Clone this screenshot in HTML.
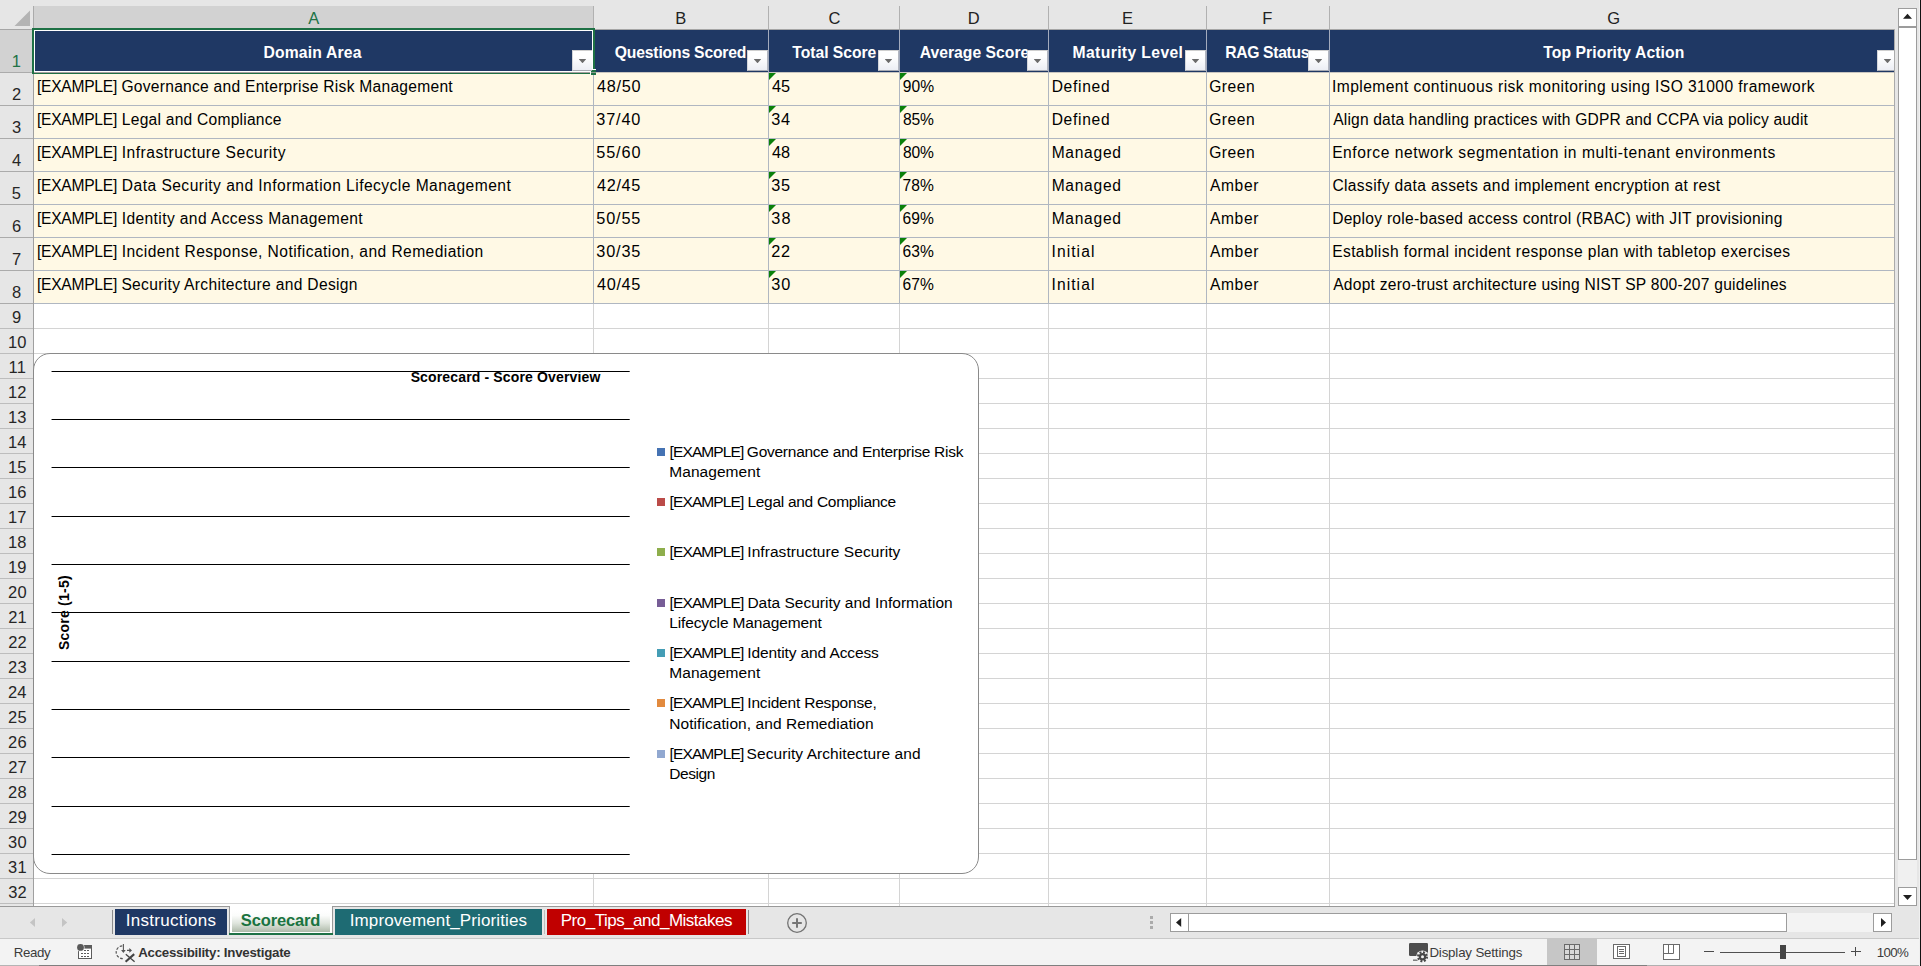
<!DOCTYPE html>
<html lang="en"><head><meta charset="utf-8"><title>Scorecard</title>
<style>
html,body{margin:0;padding:0}
body{width:1921px;height:966px;overflow:hidden;position:relative;background:#fff;font-family:"Liberation Sans",sans-serif}
div,span,svg{position:absolute;box-sizing:border-box}
.t{white-space:pre;line-height:24px;height:24px}
.dd{width:21px;height:21px;top:50px;background:linear-gradient(#ffffff 0%,#ffffff 30%,#eceef4 100%);border:1px solid #c4c6cc;border-top-color:#cfcfcf;border-left-color:#d4d6da;border-right-color:#b2b6c0;border-bottom-color:#a8abb3}
.dd:after{content:"";position:absolute;left:5.7px;top:8px;width:7.6px;height:4.2px;background:#6b6b6b;clip-path:polygon(0 0,100% 0,50% 100%)}
.tri{width:0;height:0;border-top:7px solid #0a800a;border-right:7px solid transparent}
.cl{height:1px;background:linear-gradient(90deg,rgba(0,0,0,.45) 0,rgba(0,0,0,.45) 1px,#000 1px,#000 578px,rgba(0,0,0,.7) 578px);left:51px;width:579px}
.sq{width:8px;height:8px;left:657px}
.sb{background:#fff;border:1px solid #9c9c9c}
</style></head><body>

<div style="left:0px;top:0px;width:1921px;height:29px;background:#e6e6e6;"></div>
<div style="left:0px;top:29px;width:33px;height:878px;background:#e6e6e6;"></div>
<div style="left:34px;top:6px;width:559px;height:23px;background:#d2d2d2;"></div>
<div style="left:0px;top:30px;width:33px;height:42px;background:#d2d2d2;"></div>
<svg style="left:0;top:0" width="33" height="29"><polygon points="30,10.5 30,26 14.5,26" fill="#b4b4b4"/></svg>
<div style="left:33px;top:6px;width:1px;height:23px;background:#ababab;"></div>
<div style="left:593px;top:6px;width:1px;height:23px;background:#b1b1b1;"></div>
<div style="left:768px;top:6px;width:1px;height:23px;background:#b1b1b1;"></div>
<div style="left:899px;top:6px;width:1px;height:23px;background:#b1b1b1;"></div>
<div style="left:1048px;top:6px;width:1px;height:23px;background:#b1b1b1;"></div>
<div style="left:1206px;top:6px;width:1px;height:23px;background:#b1b1b1;"></div>
<div style="left:1329px;top:6px;width:1px;height:23px;background:#b1b1b1;"></div>
<div style="left:0px;top:29px;width:1895px;height:1px;background:#a6a6a6;"></div>
<div style="left:0px;top:72px;width:33px;height:1px;background:#ababab;"></div>
<div style="left:0px;top:105px;width:33px;height:1px;background:#ababab;"></div>
<div style="left:0px;top:138px;width:33px;height:1px;background:#ababab;"></div>
<div style="left:0px;top:171px;width:33px;height:1px;background:#ababab;"></div>
<div style="left:0px;top:204px;width:33px;height:1px;background:#ababab;"></div>
<div style="left:0px;top:237px;width:33px;height:1px;background:#ababab;"></div>
<div style="left:0px;top:270px;width:33px;height:1px;background:#ababab;"></div>
<div style="left:0px;top:303px;width:33px;height:1px;background:#ababab;"></div>
<div style="left:0px;top:328px;width:33px;height:1px;background:#bdbdbd;"></div>
<div style="left:0px;top:353px;width:33px;height:1px;background:#bdbdbd;"></div>
<div style="left:0px;top:378px;width:33px;height:1px;background:#bdbdbd;"></div>
<div style="left:0px;top:403px;width:33px;height:1px;background:#bdbdbd;"></div>
<div style="left:0px;top:428px;width:33px;height:1px;background:#bdbdbd;"></div>
<div style="left:0px;top:453px;width:33px;height:1px;background:#bdbdbd;"></div>
<div style="left:0px;top:478px;width:33px;height:1px;background:#bdbdbd;"></div>
<div style="left:0px;top:503px;width:33px;height:1px;background:#bdbdbd;"></div>
<div style="left:0px;top:528px;width:33px;height:1px;background:#bdbdbd;"></div>
<div style="left:0px;top:553px;width:33px;height:1px;background:#bdbdbd;"></div>
<div style="left:0px;top:578px;width:33px;height:1px;background:#bdbdbd;"></div>
<div style="left:0px;top:603px;width:33px;height:1px;background:#bdbdbd;"></div>
<div style="left:0px;top:628px;width:33px;height:1px;background:#bdbdbd;"></div>
<div style="left:0px;top:653px;width:33px;height:1px;background:#bdbdbd;"></div>
<div style="left:0px;top:678px;width:33px;height:1px;background:#bdbdbd;"></div>
<div style="left:0px;top:703px;width:33px;height:1px;background:#bdbdbd;"></div>
<div style="left:0px;top:728px;width:33px;height:1px;background:#bdbdbd;"></div>
<div style="left:0px;top:753px;width:33px;height:1px;background:#bdbdbd;"></div>
<div style="left:0px;top:778px;width:33px;height:1px;background:#bdbdbd;"></div>
<div style="left:0px;top:803px;width:33px;height:1px;background:#bdbdbd;"></div>
<div style="left:0px;top:828px;width:33px;height:1px;background:#bdbdbd;"></div>
<div style="left:0px;top:853px;width:33px;height:1px;background:#bdbdbd;"></div>
<div style="left:0px;top:878px;width:33px;height:1px;background:#bdbdbd;"></div>
<div style="left:0px;top:903px;width:33px;height:1px;background:#bdbdbd;"></div>
<div style="left:33px;top:29px;width:1px;height:878px;background:#a0a0a0;"></div>
<div style="left:34px;top:328px;width:1860px;height:1px;background:#d4d4d4;"></div>
<div style="left:34px;top:353px;width:1860px;height:1px;background:#d4d4d4;"></div>
<div style="left:34px;top:378px;width:1860px;height:1px;background:#d4d4d4;"></div>
<div style="left:34px;top:403px;width:1860px;height:1px;background:#d4d4d4;"></div>
<div style="left:34px;top:428px;width:1860px;height:1px;background:#d4d4d4;"></div>
<div style="left:34px;top:453px;width:1860px;height:1px;background:#d4d4d4;"></div>
<div style="left:34px;top:478px;width:1860px;height:1px;background:#d4d4d4;"></div>
<div style="left:34px;top:503px;width:1860px;height:1px;background:#d4d4d4;"></div>
<div style="left:34px;top:528px;width:1860px;height:1px;background:#d4d4d4;"></div>
<div style="left:34px;top:553px;width:1860px;height:1px;background:#d4d4d4;"></div>
<div style="left:34px;top:578px;width:1860px;height:1px;background:#d4d4d4;"></div>
<div style="left:34px;top:603px;width:1860px;height:1px;background:#d4d4d4;"></div>
<div style="left:34px;top:628px;width:1860px;height:1px;background:#d4d4d4;"></div>
<div style="left:34px;top:653px;width:1860px;height:1px;background:#d4d4d4;"></div>
<div style="left:34px;top:678px;width:1860px;height:1px;background:#d4d4d4;"></div>
<div style="left:34px;top:703px;width:1860px;height:1px;background:#d4d4d4;"></div>
<div style="left:34px;top:728px;width:1860px;height:1px;background:#d4d4d4;"></div>
<div style="left:34px;top:753px;width:1860px;height:1px;background:#d4d4d4;"></div>
<div style="left:34px;top:778px;width:1860px;height:1px;background:#d4d4d4;"></div>
<div style="left:34px;top:803px;width:1860px;height:1px;background:#d4d4d4;"></div>
<div style="left:34px;top:828px;width:1860px;height:1px;background:#d4d4d4;"></div>
<div style="left:34px;top:853px;width:1860px;height:1px;background:#d4d4d4;"></div>
<div style="left:34px;top:878px;width:1860px;height:1px;background:#d4d4d4;"></div>
<div style="left:34px;top:903px;width:1860px;height:1px;background:#d4d4d4;"></div>
<div style="left:593px;top:304px;width:1px;height:602px;background:#d4d4d4;"></div>
<div style="left:768px;top:304px;width:1px;height:602px;background:#d4d4d4;"></div>
<div style="left:899px;top:304px;width:1px;height:602px;background:#d4d4d4;"></div>
<div style="left:1048px;top:304px;width:1px;height:602px;background:#d4d4d4;"></div>
<div style="left:1206px;top:304px;width:1px;height:602px;background:#d4d4d4;"></div>
<div style="left:1329px;top:304px;width:1px;height:602px;background:#d4d4d4;"></div>
<div style="left:34px;top:30px;width:1860px;height:42px;background:#1f3864;"></div>
<div style="left:34px;top:73px;width:1860px;height:230px;background:#fff9e5;"></div>
<div style="left:34px;top:72px;width:1860px;height:1px;background:#c9c6c0;"></div>
<div style="left:34px;top:105px;width:1860px;height:1px;background:#b0b7c1;"></div>
<div style="left:34px;top:138px;width:1860px;height:1px;background:#b0b7c1;"></div>
<div style="left:34px;top:171px;width:1860px;height:1px;background:#b0b7c1;"></div>
<div style="left:34px;top:204px;width:1860px;height:1px;background:#b0b7c1;"></div>
<div style="left:34px;top:237px;width:1860px;height:1px;background:#b0b7c1;"></div>
<div style="left:34px;top:270px;width:1860px;height:1px;background:#b0b7c1;"></div>
<div style="left:34px;top:303px;width:1860px;height:1px;background:#b0b7c1;"></div>
<div style="left:593px;top:72px;width:1px;height:232px;background:#b0b7c1;"></div>
<div style="left:593px;top:30px;width:1px;height:42px;background:#a3abbd;"></div>
<div style="left:768px;top:72px;width:1px;height:232px;background:#b0b7c1;"></div>
<div style="left:768px;top:30px;width:1px;height:42px;background:#a3abbd;"></div>
<div style="left:899px;top:72px;width:1px;height:232px;background:#b0b7c1;"></div>
<div style="left:899px;top:30px;width:1px;height:42px;background:#a3abbd;"></div>
<div style="left:1048px;top:72px;width:1px;height:232px;background:#b0b7c1;"></div>
<div style="left:1048px;top:30px;width:1px;height:42px;background:#a3abbd;"></div>
<div style="left:1206px;top:72px;width:1px;height:232px;background:#b0b7c1;"></div>
<div style="left:1206px;top:30px;width:1px;height:42px;background:#a3abbd;"></div>
<div style="left:1329px;top:72px;width:1px;height:232px;background:#b0b7c1;"></div>
<div style="left:1329px;top:30px;width:1px;height:42px;background:#a3abbd;"></div>
<div style="left:32px;top:28px;width:563px;height:46px;border:2px solid #1e7145;box-shadow:inset 0 0 0 1px #fff"></div>
<div style="left:34px;top:72px;width:556px;height:1px;background:#a59f9f;"></div>
<div style="left:590px;top:69px;width:6px;height:6px;background:#1e7145;border-top:1px solid #fff;border-left:1px solid #fff"></div>
<div style="left:591px;top:72px;width:5px;height:1px;background:#8a9a8f;"></div>
<div class="tri" style="left:769px;top:73px"></div>
<div class="tri" style="left:900px;top:73px"></div>
<div class="tri" style="left:769px;top:106px"></div>
<div class="tri" style="left:900px;top:106px"></div>
<div class="tri" style="left:769px;top:139px"></div>
<div class="tri" style="left:900px;top:139px"></div>
<div class="tri" style="left:769px;top:172px"></div>
<div class="tri" style="left:900px;top:172px"></div>
<div class="tri" style="left:769px;top:205px"></div>
<div class="tri" style="left:900px;top:205px"></div>
<div class="tri" style="left:769px;top:238px"></div>
<div class="tri" style="left:900px;top:238px"></div>
<div class="tri" style="left:769px;top:271px"></div>
<div class="tri" style="left:900px;top:271px"></div>
<div style="left:1894px;top:29px;width:1px;height:878px;background:#ababab;"></div>
<div style="left:33px;top:353px;width:946px;height:521px;background:#fff;border:1px solid #8a8a8a;border-radius:17px"></div>
<div class="cl" style="top:371px"></div>
<div class="cl" style="top:419px"></div>
<div class="cl" style="top:467px"></div>
<div class="cl" style="top:516px"></div>
<div class="cl" style="top:564px"></div>
<div class="cl" style="top:612px"></div>
<div class="cl" style="top:661px"></div>
<div class="cl" style="top:709px"></div>
<div class="cl" style="top:757px"></div>
<div class="cl" style="top:806px"></div>
<div class="cl" style="top:854px"></div>
<div class="sq" style="top:448px;background:#4573b3"></div>
<div class="sq" style="top:498px;background:#bb4b48"></div>
<div class="sq" style="top:548.3px;background:#8eae4c"></div>
<div class="sq" style="top:599px;background:#775d96"></div>
<div class="sq" style="top:649px;background:#449db5"></div>
<div class="sq" style="top:699px;background:#e28a3e"></div>
<div class="sq" style="top:750.2px;background:#91a8d0"></div>
<span class="t" style="left:26.9px;top:600.5px;width:74px;font-size:14px;font-weight:700;transform:rotate(-90deg);transform-origin:50% 50%;text-align:center;letter-spacing:0.22px">Score (1-5)</span>
<div style="left:1895px;top:0px;width:26px;height:907px;background:#e6e6e6;"></div>
<div class="sb" style="left:1898px;top:8px;width:19px;height:19px"></div>
<svg style="left:1898px;top:8px" width="19" height="19"><polygon points="5,10.8 14,10.8 9.5,5.8" fill="#1f1f1f"/></svg>
<div class="sb" style="left:1898px;top:27px;width:19px;height:833px"></div>
<div style="left:1898px;top:860px;width:19px;height:27px;background:#f0f0f0;"></div>
<div class="sb" style="left:1898px;top:887px;width:19px;height:19px"></div>
<svg style="left:1898px;top:887px" width="19" height="19"><polygon points="5,8 14,8 9.5,13" fill="#1f1f1f"/></svg>
<div style="left:0px;top:907px;width:1921px;height:31px;background:#e6e6e6;"></div>
<div style="left:0px;top:906px;width:1895px;height:1px;background:#999;"></div>
<svg style="left:0;top:906px" width="110" height="32"><polygon points="29.9,16.5 35,12 35,21" fill="#c4c4c4"/><polygon points="67.2,16.5 62,12 62,21" fill="#c4c4c4"/></svg>
<div style="left:112px;top:910px;width:1px;height:24px;background:#8c8c8c;"></div>
<div style="left:115px;top:909px;width:112px;height:26px;background:#1f3864;"></div>
<div style="left:229px;top:906px;width:104px;height:29px;background:#fff;"></div>
<div style="left:229px;top:906px;width:1px;height:27px;background:#999;"></div>
<div style="left:332px;top:906px;width:1px;height:27px;background:#999;"></div>
<div style="left:232px;top:910px;width:98px;height:22px;background:linear-gradient(#ffffff 0%,#fbfcfb 25%,#dfe5dd 60%,#aebaa9 100%)"></div>
<div style="left:229px;top:933px;width:104px;height:2px;background:#1e7145;"></div>
<div style="left:335px;top:909px;width:207px;height:26px;background:#1e6b73;"></div>
<div style="left:544px;top:910px;width:1px;height:24px;background:#bdbdbd;"></div>
<div style="left:547px;top:909px;width:199px;height:26px;background:#c00000;"></div>
<div style="left:748px;top:910px;width:1px;height:24px;background:#8c8c8c;"></div>
<svg style="left:785px;top:911px" width="24" height="24"><circle cx="12" cy="12" r="9.3" fill="none" stroke="#737373" stroke-width="1.3"/><path d="M7.2 12H16.8M12 7.2V16.8" stroke="#767676" stroke-width="2"/></svg>
<div style="left:1150px;top:916px;width:3px;height:3px;background:#ababab;"></div>
<div style="left:1150px;top:921px;width:3px;height:3px;background:#ababab;"></div>
<div style="left:1150px;top:926px;width:3px;height:3px;background:#ababab;"></div>
<div style="left:1170px;top:913px;width:722px;height:19px;background:#f3f3f3;"></div>
<div class="sb" style="left:1188px;top:913px;width:599px;height:19px"></div>
<div class="sb" style="left:1170px;top:913px;width:19px;height:19px"></div>
<svg style="left:1170px;top:913px" width="19" height="19"><polygon points="6,9.5 11.2,5 11.2,14" fill="#1f1f1f"/></svg>
<div class="sb" style="left:1873px;top:913px;width:19px;height:19px"></div>
<svg style="left:1873px;top:913px" width="19" height="19"><polygon points="13,9.5 8,5 8,14" fill="#1f1f1f"/></svg>
<div style="left:0px;top:938px;width:1921px;height:28px;background:#f3f3f3;"></div>
<div style="left:0px;top:938px;width:1921px;height:1px;background:#c8c8c8;"></div>
<div style="left:1547px;top:938px;width:50px;height:27px;background:#c6c6c6;"></div>
<svg style="left:76px;top:943px" width="20" height="18"><rect x="2.5" y="2.5" width="13" height="13" fill="#fff" stroke="#5c5c5c"/><rect x="8" y="2" width="8" height="3.6" fill="#5c5c5c"/><path d="M8 7.5h2M11 7.5h2M5 10.5h2M8 10.5h2M11 10.5h2M5 13.5h2M8 13.5h2M11 13.5h2" stroke="#5c5c5c" stroke-width="1"/><circle cx="4.5" cy="4.4" r="4" fill="#f3f3f3"/><circle cx="4.5" cy="4.4" r="3.4" fill="#595959"/></svg>
<svg style="left:114px;top:942px" width="24" height="22"><path d="M8.3 3.8A6.4 6.4 0 0 0 8.9 16.6" fill="none" stroke="#555" stroke-width="1.2" stroke-dasharray="2.7 1.5"/><path d="M9.4 2v8M13 8.4h4" fill="none" stroke="#555" stroke-width="1.1"/><path d="M7.1 8h4.6l-2.3 3zM15.3 6.1v4.6l2.7-2.3z" fill="#555"/><path d="M11.6 19.7l8.6-7.6" stroke="#444" stroke-width="2.1"/><path d="M11.8 12.2l8.8 7.6" stroke="#444" stroke-width="1.3"/></svg>
<svg style="left:1407px;top:941px" width="24" height="22"><rect x="2" y="2" width="19" height="13" rx="1.2" fill="#4d4d4d"/><rect x="6" y="18.6" width="5" height="1.1" fill="#4d4d4d"/><circle cx="15.5" cy="15.7" r="6.3" fill="#f3f3f3"/><circle cx="15.5" cy="15.7" r="4.5" fill="none" stroke="#474747" stroke-width="2" stroke-dasharray="1.9 1.63"/><circle cx="15.5" cy="15.7" r="3.8" fill="#474747"/><circle cx="15.5" cy="15.7" r="1.5" fill="#f3f3f3"/></svg>
<svg style="left:1564px;top:944px" width="16" height="16"><rect x=".5" y=".5" width="15" height="15" fill="#d8d8d8" stroke="#6a6a6a"/><path d="M5.5 .5v15M10.5 .5v15M.5 5.5h15M.5 10.5h15" fill="none" stroke="#6a6a6a"/></svg>
<svg style="left:1613px;top:944px" width="17" height="15"><rect x=".5" y=".5" width="16" height="14" fill="#fff" stroke="#6a6a6a"/><rect x="4.5" y="2.5" width="8" height="10" fill="#fff" stroke="#6a6a6a"/><path d="M6 5.5h5M6 7.5h5M6 9.5h5" fill="none" stroke="#6a6a6a"/></svg>
<svg style="left:1663px;top:944px" width="17" height="16"><rect x=".5" y=".5" width="16" height="15" fill="#fff" stroke="#6a6a6a"/><path d="M5.5 .5v9M10.5 .5v9M.5 9.5h10" fill="none" stroke="#6a6a6a"/></svg>
<div style="left:1704px;top:951px;width:10px;height:1px;background:#4a4a4a;"></div>
<div style="left:1720px;top:952px;width:125px;height:1px;background:#505050;"></div>
<div style="left:1780px;top:945px;width:6px;height:14px;background:#444;"></div>
<div style="left:1851px;top:951px;width:10px;height:1px;background:#4a4a4a;"></div>
<div style="left:1855px;top:947px;width:1px;height:9px;background:#4a4a4a;"></div>
<div style="left:0px;top:965px;width:39px;height:1px;background:#b4b4b4;"></div>
<div style="left:39px;top:965px;width:1608px;height:1px;background:#7f7f7f;"></div>
<div style="left:1647px;top:965px;width:274px;height:1px;background:#b0b0b0;"></div>
<div style="left:1919px;top:0px;width:1px;height:966px;background:#f0f0f0;"></div>
<div style="left:1920px;top:0px;width:1px;height:966px;background:#111;"></div>
<span class="t" style="left:308.24px;top:6.00px;font-size:16.5px;color:#217346;">A</span>
<span class="t" style="left:675.37px;top:6.00px;font-size:16.5px;color:#222;">B</span>
<span class="t" style="left:828.62px;top:6.00px;font-size:16.5px;color:#222;">C</span>
<span class="t" style="left:967.83px;top:6.00px;font-size:16.5px;color:#222;">D</span>
<span class="t" style="left:1122.10px;top:6.00px;font-size:16.5px;color:#222;">E</span>
<span class="t" style="left:1262.15px;top:6.00px;font-size:16.5px;color:#222;">F</span>
<span class="t" style="left:1607.33px;top:6.00px;font-size:16.5px;color:#222;">G</span>
<span class="t" style="left:11.82px;top:49.00px;font-size:16.5px;color:#217346;letter-spacing:0.150px;">1</span>
<span class="t" style="left:11.95px;top:82.00px;font-size:16.5px;color:#262626;letter-spacing:0.150px;">2</span>
<span class="t" style="left:11.91px;top:115.00px;font-size:16.5px;color:#262626;letter-spacing:0.150px;">3</span>
<span class="t" style="left:12.12px;top:148.00px;font-size:16.5px;color:#262626;letter-spacing:0.150px;">4</span>
<span class="t" style="left:11.86px;top:181.00px;font-size:16.5px;color:#262626;letter-spacing:0.150px;">5</span>
<span class="t" style="left:11.91px;top:214.00px;font-size:16.5px;color:#262626;letter-spacing:0.150px;">6</span>
<span class="t" style="left:11.95px;top:247.00px;font-size:16.5px;color:#262626;letter-spacing:0.150px;">7</span>
<span class="t" style="left:12.08px;top:280.00px;font-size:16.5px;color:#262626;letter-spacing:0.150px;">8</span>
<span class="t" style="left:11.94px;top:305.00px;font-size:16.5px;color:#262626;letter-spacing:0.150px;">9</span>
<span class="t" style="left:7.95px;top:330.00px;font-size:16.5px;color:#262626;letter-spacing:0.150px;">10</span>
<span class="t" style="left:8.62px;top:355.00px;font-size:16.5px;color:#262626;letter-spacing:0.150px;">11</span>
<span class="t" style="left:8.01px;top:380.00px;font-size:16.5px;color:#262626;letter-spacing:0.150px;">12</span>
<span class="t" style="left:7.98px;top:405.00px;font-size:16.5px;color:#262626;letter-spacing:0.150px;">13</span>
<span class="t" style="left:7.90px;top:430.00px;font-size:16.5px;color:#262626;letter-spacing:0.150px;">14</span>
<span class="t" style="left:7.97px;top:455.00px;font-size:16.5px;color:#262626;letter-spacing:0.150px;">15</span>
<span class="t" style="left:7.98px;top:480.00px;font-size:16.5px;color:#262626;letter-spacing:0.150px;">16</span>
<span class="t" style="left:8.01px;top:505.00px;font-size:16.5px;color:#262626;letter-spacing:0.150px;">17</span>
<span class="t" style="left:7.98px;top:530.00px;font-size:16.5px;color:#262626;letter-spacing:0.150px;">18</span>
<span class="t" style="left:7.99px;top:555.00px;font-size:16.5px;color:#262626;letter-spacing:0.150px;">19</span>
<span class="t" style="left:8.08px;top:580.00px;font-size:16.5px;color:#262626;letter-spacing:0.150px;">20</span>
<span class="t" style="left:8.13px;top:605.00px;font-size:16.5px;color:#262626;letter-spacing:0.150px;">21</span>
<span class="t" style="left:8.14px;top:630.00px;font-size:16.5px;color:#262626;letter-spacing:0.150px;">22</span>
<span class="t" style="left:8.11px;top:655.00px;font-size:16.5px;color:#262626;letter-spacing:0.150px;">23</span>
<span class="t" style="left:8.03px;top:680.00px;font-size:16.5px;color:#262626;letter-spacing:0.150px;">24</span>
<span class="t" style="left:8.10px;top:705.00px;font-size:16.5px;color:#262626;letter-spacing:0.150px;">25</span>
<span class="t" style="left:8.11px;top:730.00px;font-size:16.5px;color:#262626;letter-spacing:0.150px;">26</span>
<span class="t" style="left:8.14px;top:755.00px;font-size:16.5px;color:#262626;letter-spacing:0.150px;">27</span>
<span class="t" style="left:8.11px;top:780.00px;font-size:16.5px;color:#262626;letter-spacing:0.150px;">28</span>
<span class="t" style="left:8.13px;top:805.00px;font-size:16.5px;color:#262626;letter-spacing:0.150px;">29</span>
<span class="t" style="left:8.07px;top:830.00px;font-size:16.5px;color:#262626;letter-spacing:0.150px;">30</span>
<span class="t" style="left:8.12px;top:855.00px;font-size:16.5px;color:#262626;letter-spacing:0.150px;">31</span>
<span class="t" style="left:8.13px;top:880.00px;font-size:16.5px;color:#262626;letter-spacing:0.150px;">32</span>
<span class="t" style="left:263.44px;top:41.00px;font-size:15.7px;color:#fff;font-weight:700;letter-spacing:0.176px;">Domain Area</span>
<span class="t" style="left:614.82px;top:41.00px;font-size:15.7px;color:#fff;font-weight:700;letter-spacing:-0.177px;">Questions Scored</span>
<span class="t" style="left:792.25px;top:41.00px;font-size:15.7px;color:#fff;font-weight:700;letter-spacing:-0.017px;">Total Score</span>
<span class="t" style="left:919.70px;top:41.00px;font-size:15.7px;color:#fff;font-weight:700;letter-spacing:0.025px;">Average Score</span>
<span class="t" style="left:1072.54px;top:41.00px;font-size:15.7px;color:#fff;font-weight:700;letter-spacing:0.380px;">Maturity Level</span>
<span class="t" style="left:1225.14px;top:41.00px;font-size:15.7px;color:#fff;font-weight:700;letter-spacing:-0.312px;">RAG Status</span>
<span class="t" style="left:1543.25px;top:41.00px;font-size:15.7px;color:#fff;font-weight:700;letter-spacing:0.088px;">Top Priority Action</span>
<span class="t" style="left:36.99px;top:75.00px;font-size:15.6px;color:#000;letter-spacing:-0.258px;">[EXAMPLE] </span>
<span class="t" style="left:121.43px;top:75.00px;font-size:15.6px;color:#000;letter-spacing:0.264px;">Governance and Enterprise Risk Management</span>
<span class="t" style="left:596.98px;top:74.00px;font-size:16.3px;color:#000;letter-spacing:0.680px;">48/50</span>
<span class="t" style="left:771.98px;top:74.00px;font-size:16.3px;color:#000;letter-spacing:0.071px;">45</span>
<span class="t" style="left:902.85px;top:75.00px;font-size:15.6px;color:#000;letter-spacing:0.018px;">90%</span>
<span class="t" style="left:1051.65px;top:75.00px;font-size:15.6px;color:#000;letter-spacing:0.710px;">Defined</span>
<span class="t" style="left:1209.13px;top:75.00px;font-size:15.6px;color:#000;letter-spacing:0.529px;">Green</span>
<span class="t" style="left:1332.02px;top:75.00px;font-size:15.6px;color:#000;letter-spacing:0.437px;">Implement continuous risk monitoring using ISO 31000 framework</span>
<span class="t" style="left:36.99px;top:108.00px;font-size:15.6px;color:#000;letter-spacing:-0.258px;">[EXAMPLE] </span>
<span class="t" style="left:121.85px;top:108.00px;font-size:15.6px;color:#000;letter-spacing:0.234px;">Legal and Compliance</span>
<span class="t" style="left:596.32px;top:107.00px;font-size:16.3px;color:#000;letter-spacing:0.842px;">37/40</span>
<span class="t" style="left:771.32px;top:107.00px;font-size:16.3px;color:#000;letter-spacing:0.733px;">34</span>
<span class="t" style="left:902.89px;top:108.00px;font-size:15.6px;color:#000;letter-spacing:-0.053px;">85%</span>
<span class="t" style="left:1051.65px;top:108.00px;font-size:15.6px;color:#000;letter-spacing:0.710px;">Defined</span>
<span class="t" style="left:1209.13px;top:108.00px;font-size:15.6px;color:#000;letter-spacing:0.529px;">Green</span>
<span class="t" style="left:1333.21px;top:108.00px;font-size:15.6px;color:#000;letter-spacing:0.176px;">Align data handling practices with GDPR and CCPA via policy audit</span>
<span class="t" style="left:36.99px;top:141.00px;font-size:15.6px;color:#000;letter-spacing:-0.258px;">[EXAMPLE] </span>
<span class="t" style="left:121.72px;top:141.00px;font-size:15.6px;color:#000;letter-spacing:0.510px;">Infrastructure Security</span>
<span class="t" style="left:596.25px;top:140.00px;font-size:16.3px;color:#000;letter-spacing:0.861px;">55/60</span>
<span class="t" style="left:771.98px;top:140.00px;font-size:16.3px;color:#000;letter-spacing:-0.024px;">48</span>
<span class="t" style="left:902.89px;top:141.00px;font-size:15.6px;color:#000;letter-spacing:-0.053px;">80%</span>
<span class="t" style="left:1051.65px;top:141.00px;font-size:15.6px;color:#000;letter-spacing:0.716px;">Managed</span>
<span class="t" style="left:1209.13px;top:141.00px;font-size:15.6px;color:#000;letter-spacing:0.529px;">Green</span>
<span class="t" style="left:1332.15px;top:141.00px;font-size:15.6px;color:#000;letter-spacing:0.576px;">Enforce network segmentation in multi-tenant environments</span>
<span class="t" style="left:36.99px;top:174.00px;font-size:15.6px;color:#000;letter-spacing:-0.258px;">[EXAMPLE] </span>
<span class="t" style="left:121.85px;top:174.00px;font-size:15.6px;color:#000;letter-spacing:0.455px;">Data Security and Information Lifecycle Management</span>
<span class="t" style="left:596.98px;top:173.00px;font-size:16.3px;color:#000;letter-spacing:0.673px;">42/45</span>
<span class="t" style="left:771.32px;top:173.00px;font-size:16.3px;color:#000;letter-spacing:0.529px;">35</span>
<span class="t" style="left:902.55px;top:174.00px;font-size:15.6px;color:#000;letter-spacing:0.092px;">78%</span>
<span class="t" style="left:1051.65px;top:174.00px;font-size:15.6px;color:#000;letter-spacing:0.716px;">Managed</span>
<span class="t" style="left:1209.91px;top:174.00px;font-size:15.6px;color:#000;letter-spacing:0.642px;">Amber</span>
<span class="t" style="left:1332.42px;top:174.00px;font-size:15.6px;color:#000;letter-spacing:0.354px;">Classify data assets and implement encryption at rest</span>
<span class="t" style="left:36.99px;top:207.00px;font-size:15.6px;color:#000;letter-spacing:-0.258px;">[EXAMPLE] </span>
<span class="t" style="left:121.72px;top:207.00px;font-size:15.6px;color:#000;letter-spacing:0.387px;">Identity and Access Management</span>
<span class="t" style="left:596.25px;top:206.00px;font-size:16.3px;color:#000;letter-spacing:0.846px;">50/55</span>
<span class="t" style="left:771.32px;top:206.00px;font-size:16.3px;color:#000;letter-spacing:1.047px;">38</span>
<span class="t" style="left:902.55px;top:207.00px;font-size:15.6px;color:#000;letter-spacing:0.092px;">69%</span>
<span class="t" style="left:1051.65px;top:207.00px;font-size:15.6px;color:#000;letter-spacing:0.716px;">Managed</span>
<span class="t" style="left:1209.91px;top:207.00px;font-size:15.6px;color:#000;letter-spacing:0.642px;">Amber</span>
<span class="t" style="left:1332.15px;top:207.00px;font-size:15.6px;color:#000;letter-spacing:0.271px;">Deploy role-based access control (RBAC) with JIT provisioning</span>
<span class="t" style="left:36.99px;top:240.00px;font-size:15.6px;color:#000;letter-spacing:-0.258px;">[EXAMPLE] </span>
<span class="t" style="left:121.72px;top:240.00px;font-size:15.6px;color:#000;letter-spacing:0.424px;">Incident Response, Notification, and Remediation</span>
<span class="t" style="left:596.32px;top:239.00px;font-size:16.3px;color:#000;letter-spacing:0.834px;">30/35</span>
<span class="t" style="left:771.35px;top:239.00px;font-size:16.3px;color:#000;letter-spacing:0.678px;">22</span>
<span class="t" style="left:902.55px;top:240.00px;font-size:15.6px;color:#000;letter-spacing:0.092px;">63%</span>
<span class="t" style="left:1051.52px;top:240.00px;font-size:15.6px;color:#000;letter-spacing:1.076px;">Initial</span>
<span class="t" style="left:1209.91px;top:240.00px;font-size:15.6px;color:#000;letter-spacing:0.642px;">Amber</span>
<span class="t" style="left:1332.15px;top:240.00px;font-size:15.6px;color:#000;letter-spacing:0.397px;">Establish formal incident response plan with tabletop exercises</span>
<span class="t" style="left:36.99px;top:273.00px;font-size:15.6px;color:#000;letter-spacing:-0.258px;">[EXAMPLE] </span>
<span class="t" style="left:121.39px;top:273.00px;font-size:15.6px;color:#000;letter-spacing:0.319px;">Security Architecture and Design</span>
<span class="t" style="left:596.98px;top:272.00px;font-size:16.3px;color:#000;letter-spacing:0.673px;">40/45</span>
<span class="t" style="left:771.32px;top:272.00px;font-size:16.3px;color:#000;letter-spacing:0.796px;">30</span>
<span class="t" style="left:902.55px;top:273.00px;font-size:15.6px;color:#000;letter-spacing:0.092px;">67%</span>
<span class="t" style="left:1051.52px;top:273.00px;font-size:15.6px;color:#000;letter-spacing:1.076px;">Initial</span>
<span class="t" style="left:1209.91px;top:273.00px;font-size:15.6px;color:#000;letter-spacing:0.642px;">Amber</span>
<span class="t" style="left:1333.21px;top:273.00px;font-size:15.6px;color:#000;letter-spacing:0.238px;">Adopt zero-trust architecture using NIST SP 800-207 guidelines</span>
<span class="t" style="left:410.64px;top:365.00px;font-size:14px;color:#000;font-weight:700;letter-spacing:0.148px;">Scorecard - Score Overview</span>
<span class="t" style="left:669.59px;top:440.00px;font-size:15.5px;color:#000;letter-spacing:-0.894px;">[EXAMPLE] </span>
<span class="t" style="left:746.83px;top:440.00px;font-size:15.5px;color:#000;letter-spacing:-0.254px;">Governance and Enterprise Risk </span>
<span class="t" style="left:669.27px;top:460.00px;font-size:15.5px;color:#000;letter-spacing:0.051px;">Management</span>
<span class="t" style="left:669.59px;top:490.00px;font-size:15.5px;color:#000;letter-spacing:-0.894px;">[EXAMPLE] </span>
<span class="t" style="left:747.42px;top:490.00px;font-size:15.5px;color:#000;letter-spacing:-0.289px;">Legal and Compliance</span>
<span class="t" style="left:669.59px;top:540.00px;font-size:15.5px;color:#000;letter-spacing:-0.894px;">[EXAMPLE] </span>
<span class="t" style="left:747.27px;top:540.00px;font-size:15.5px;color:#000;letter-spacing:0.063px;">Infrastructure Security</span>
<span class="t" style="left:669.59px;top:591.00px;font-size:15.5px;color:#000;letter-spacing:-0.894px;">[EXAMPLE] </span>
<span class="t" style="left:747.42px;top:591.00px;font-size:15.5px;color:#000;letter-spacing:0.006px;">Data Security and Information </span>
<span class="t" style="left:669.27px;top:611.00px;font-size:15.5px;color:#000;letter-spacing:-0.131px;">Lifecycle Management</span>
<span class="t" style="left:669.59px;top:641.00px;font-size:15.5px;color:#000;letter-spacing:-0.894px;">[EXAMPLE] </span>
<span class="t" style="left:747.27px;top:641.00px;font-size:15.5px;color:#000;letter-spacing:-0.109px;">Identity and Access </span>
<span class="t" style="left:669.27px;top:661.00px;font-size:15.5px;color:#000;letter-spacing:0.051px;">Management</span>
<span class="t" style="left:669.59px;top:691.00px;font-size:15.5px;color:#000;letter-spacing:-0.894px;">[EXAMPLE] </span>
<span class="t" style="left:747.27px;top:691.00px;font-size:15.5px;color:#000;letter-spacing:-0.188px;">Incident Response, </span>
<span class="t" style="left:669.27px;top:712.00px;font-size:15.5px;color:#000;letter-spacing:0.068px;">Notification, and Remediation</span>
<span class="t" style="left:669.59px;top:742.00px;font-size:15.5px;color:#000;letter-spacing:-0.894px;">[EXAMPLE] </span>
<span class="t" style="left:746.60px;top:742.00px;font-size:15.5px;color:#000;letter-spacing:0.068px;">Security Architecture and </span>
<span class="t" style="left:669.27px;top:762.00px;font-size:15.5px;color:#000;letter-spacing:-0.419px;">Design</span>
<span class="t" style="left:125.70px;top:909.00px;font-size:17px;color:#fff;letter-spacing:0.306px;">Instructions</span>
<span class="t" style="left:240.78px;top:908.00px;font-size:16.5px;color:#1a7340;font-weight:700;letter-spacing:-0.133px;">Scorecard</span>
<span class="t" style="left:349.70px;top:909.00px;font-size:17px;color:#fff;letter-spacing:0.121px;">Improvement_Priorities</span>
<span class="t" style="left:560.76px;top:909.00px;font-size:17px;color:#fff;letter-spacing:-0.502px;">Pro_Tips_and_Mistakes</span>
<span class="t" style="left:13.71px;top:941.00px;font-size:13.3px;color:#3b3b3b;letter-spacing:-0.370px;">Ready</span>
<span class="t" style="left:138.17px;top:941.00px;font-size:13.3px;color:#333;font-weight:700;letter-spacing:-0.251px;">Accessibility: Investigate</span>
<span class="t" style="left:1429.41px;top:941.00px;font-size:13.3px;color:#3b3b3b;letter-spacing:-0.164px;">Display Settings</span>
<span class="t" style="left:1876.85px;top:941.00px;font-size:13.3px;color:#3b3b3b;letter-spacing:-0.661px;">100%</span>
<div style="left:572px;top:50px;width:20px;height:21px;overflow:hidden"><div class="dd" style="left:0;top:0"></div></div>
<div class="dd" style="left:747px"></div>
<div class="dd" style="left:878px"></div>
<div class="dd" style="left:1027px"></div>
<div class="dd" style="left:1185px"></div>
<div class="dd" style="left:1308px"></div>
<div style="left:1877px;top:50px;width:17px;height:21px;overflow:hidden"><div class="dd" style="left:0;top:0"></div></div>
</body></html>
